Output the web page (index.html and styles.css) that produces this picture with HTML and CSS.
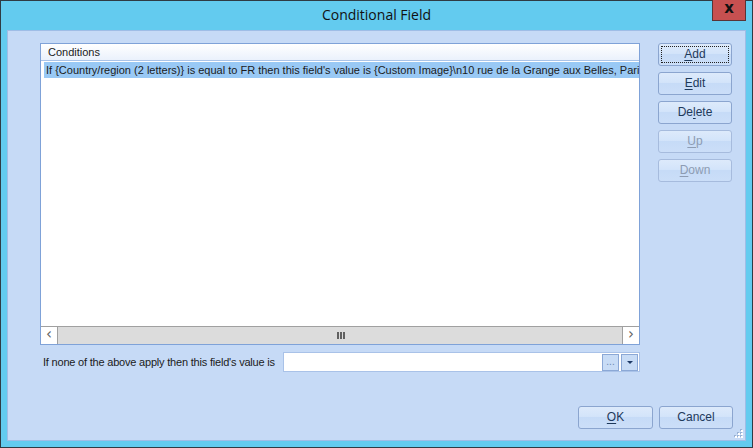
FILE: index.html
```html
<!DOCTYPE html>
<html>
<head>
<meta charset="utf-8">
<link rel="stylesheet" href="styles.css">
</head>
<body>
<div class="window">
  <div class="titlebar">
    <div class="title">Conditional Field</div>
    <div class="close">x</div>
  </div>
  <div class="client">
    <div class="main">
      <div class="left">
        <div class="list">
          <div class="list-header"><span class="col">Conditions</span></div>
          <div class="list-body">
            <div class="row selected">If {Country/region (2 letters)} is equal to FR then this field's value is {Custom Image}\n10 rue de la Grange aux Belles, Paris</div>
          </div>
          <div class="hscroll">
            <div class="arrow">&lsaquo;</div>
            <div class="thumb"><span class="grip"><i></i><i></i><i></i></span></div>
            <div class="arrow">&rsaquo;</div>
          </div>
        </div>
        <div class="fallback">
          <span class="fb-label">If none of the above apply then this field's value is</span>
          <div class="fb-box">
            <div class="mini">...</div>
            <div class="mini"><span class="tri"></span></div>
          </div>
        </div>
      </div>
      <div class="side">
        <div class="btn focused"><span class="focus"><u>A</u>dd</span></div>
        <div class="btn"><span><u>E</u>dit</span></div>
        <div class="btn"><span>De<u>l</u>ete</span></div>
        <div class="btn disabled"><span><u>U</u>p</span></div>
        <div class="btn disabled"><span><u>D</u>own</span></div>
      </div>
    </div>
    <div class="bottom">
      <div class="btn ok"><span><u>O</u>K</span></div>
      <div class="btn"><span>Cancel</span></div>
    </div>
    <div class="grip-corner">
      <i class="g1"></i><i class="g2"></i><i class="g3"></i>
      <i class="g4"></i><i class="g5"></i>
      <i class="g6"></i>
    </div>
  </div>
</div>
</body>
</html>
```

FILE: styles.css
```css
html, body {
  margin: 0;
  padding: 0;
}
body {
  width: 753px;
  height: 448px;
  overflow: hidden;
  font-family: "Liberation Sans", Arial, sans-serif;
  font-size: 11px;
  color: #1b1b1b;
}
.window {
  box-sizing: border-box;
  width: 753px;
  height: 448px;
  border: 1px solid #2f3b44;
  background: #63cbef;
  display: flex;
  flex-direction: column;
}
.titlebar {
  height: 29px;
  position: relative;
  display: flex;
  align-items: center;
  justify-content: center;
}
.title {
  font-family: "Open Sans", "Liberation Sans", sans-serif;
  font-size: 14px;
  color: #111;
  margin-top: -2px;
}
.close {
  position: absolute;
  top: -1px;
  right: 6px;
  width: 34px;
  height: 21px;
  box-sizing: border-box;
  background: #c75050;
  border: 1px solid #5a3436;
  border-top: none;
  color: #111;
  font-weight: bold;
  font-size: 15px;
  line-height: 17px;
  text-align: center;
  font-family: "DejaVu Sans", sans-serif;
}
.client {
  position: relative;
  flex: 1;
  margin: 0 6px 6px 6px;
  border: 1px solid #9fbde6;
  background: #c6daf6;
  padding: 12px 12px 11px 32px;
  display: flex;
  flex-direction: column;
}
.main {
  display: flex;
  gap: 18px;
}
.left {
  width: 600px;
  display: flex;
  flex-direction: column;
  gap: 7px;
}
.list {
  box-sizing: border-box;
  height: 302px;
  border: 1px solid #7fa2d8;
  background: #fff;
  display: flex;
  flex-direction: column;
  overflow: hidden;
}
.list-header {
  height: 16px;
  flex: none;
  background: linear-gradient(#ffffff, #eaf1fc);
  border-bottom: 1px solid #a9c3e8;
  display: flex;
  align-items: center;
  padding-left: 7px;
}
.col {
  line-height: 16px;
}
.list-body {
  flex: 1;
  padding: 1px 0 0 3px;
  overflow: hidden;
}
.row {
  height: 16px;
  line-height: 16px;
  white-space: nowrap;
  padding-left: 2px;
  overflow: hidden;
}
.selected {
  background: #99c9f5;
}
.hscroll {
  height: 17px;
  flex: none;
  display: flex;
  border-top: 1px solid #a0a0a0;
  background: #dedede;
}
.arrow {
  width: 16px;
  background: #fff;
  color: #606060;
  text-align: center;
  font-size: 15px;
  line-height: 15px;
  font-family: "DejaVu Sans", sans-serif;
}
.arrow:first-child {
  border-right: 1px solid #a0a0a0;
}
.arrow:last-child {
  border-left: 1px solid #a0a0a0;
}
.thumb {
  flex: 1;
  display: flex;
  align-items: center;
  justify-content: center;
  background: #dcdcdc;
}
.grip {
  display: flex;
  gap: 1px;
  margin-left: 2px;
}
.grip i {
  display: block;
  width: 2px;
  height: 7px;
  background: #606060;
}
.fallback {
  height: 20px;
  display: flex;
  align-items: center;
}
.fb-label {
  flex: none;
  width: 240px;
  padding-left: 3px;
  white-space: nowrap;
  letter-spacing: -0.2px;
}
.fb-box {
  flex: 1;
  height: 20px;
  box-sizing: border-box;
  border: 1px solid #a9c2e8;
  background: #fff;
  display: flex;
  justify-content: flex-end;
  align-items: center;
  gap: 2px;
  padding-right: 1px;
}
.mini {
  box-sizing: border-box;
  width: 17px;
  height: 17px;
  border: 1px solid #8ba8d6;
  background: #c8dcf6;
  color: #6d87b0;
  font-size: 10px;
  line-height: 14px;
  text-align: center;
  display: flex;
  align-items: center;
  justify-content: center;
}
.tri {
  width: 0;
  height: 0;
  border-left: 3px solid transparent;
  border-right: 3px solid transparent;
  border-top: 3px solid #1e3a66;
}
.side {
  width: 74px;
  display: flex;
  flex-direction: column;
  gap: 6px;
}
.btn {
  box-sizing: border-box;
  height: 23px;
  width: 74px;
  border: 1px solid #8ba5cf;
  border-radius: 3px;
  background: linear-gradient(#ddeafb 0%, #d3e4fa 45%, #c6dbf7 50%, #cbdef8 100%);
  display: flex;
  align-items: center;
  justify-content: center;
  color: #1e395b;
  font-size: 12px;
}
.btn span {
  line-height: 15px;
}
.btn.focused {
  padding: 2px;
}
.btn .focus {
  flex: 1;
  align-self: stretch;
  border: 1px dotted #222;
  display: flex;
  align-items: center;
  justify-content: center;
}
.btn.disabled {
  color: #8d9cb3;
  border-color: #a6bbdd;
}
.btn u {
  text-decoration-thickness: 1px;
  text-underline-offset: 2px;
}
.bottom {
  margin-top: auto;
  display: flex;
  justify-content: flex-end;
  gap: 6px;
}
.btn.ok {
  width: 75px;
}
.grip-corner {
  position: absolute;
  right: 0;
  bottom: 0;
  width: 12px;
  height: 12px;
}
.grip-corner i {
  position: absolute;
  width: 2px;
  height: 2px;
  background: #ffffff;
  box-shadow: -1px -1px 0 #9ab2d4;
}
.g1 { right: 2px; bottom: 2px; }
.g2 { right: 5px; bottom: 2px; }
.g3 { right: 8px; bottom: 2px; }
.g4 { right: 2px; bottom: 5px; }
.g5 { right: 5px; bottom: 5px; }
.g6 { right: 2px; bottom: 8px; }
```
